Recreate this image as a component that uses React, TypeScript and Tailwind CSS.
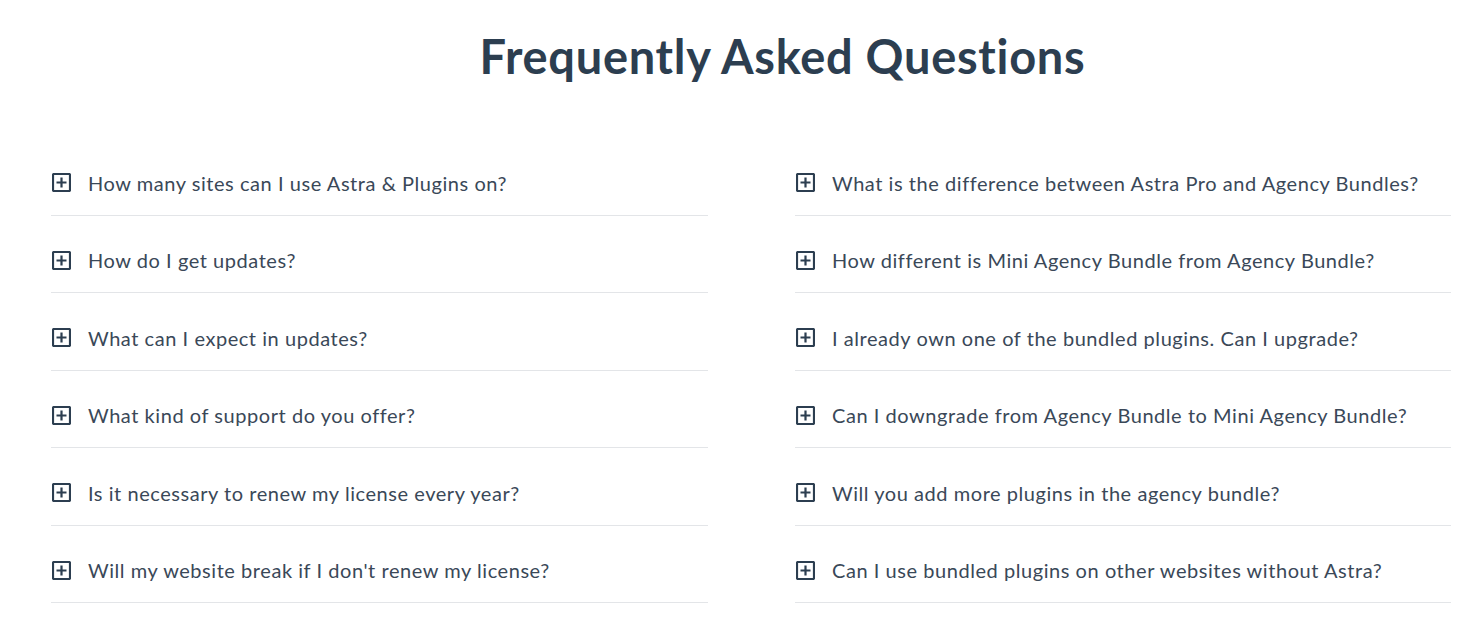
import React from 'react';

const left = [
  'How many sites can I use Astra & Plugins on?',
  'How do I get updates?',
  'What can I expect in updates?',
  'What kind of support do you offer?',
  'Is it necessary to renew my license every year?',
  "Will my website break if I don't renew my license?",
];

const right = [
  'What is the difference between Astra Pro and Agency Bundles?',
  'How different is Mini Agency Bundle from Agency Bundle?',
  'I already own one of the bundled plugins. Can I upgrade?',
  'Can I downgrade from Agency Bundle to Mini Agency Bundle?',
  'Will you add more plugins in the agency bundle?',
  'Can I use bundled plugins on other websites without Astra?',
];

const PlusBox = () => (
  <svg width="19" height="19" viewBox="0 0 19 19" className="shrink-0">
    <rect x="1" y="1" width="17" height="17" fill="none" stroke="#2c3e50" strokeWidth="2.2" rx="1" />
    <path d="M9.5 4.5v10M4.5 9.5h10" stroke="#2c3e50" strokeWidth="2.2" />
  </svg>
);

const Column = ({ items }: { items: string[] }) => (
  <div className="flex flex-col">
    {items.map((q) => (
      <div key={q} className="h-[77.5px] flex items-end pb-[17px] border-b border-[#e3e5e8]">
        <div className="flex items-center gap-[17px] pl-[1px]">
          <PlusBox />
          <span className="text-[20px] leading-[30px] tracking-[0.55px] text-[#3a4858]">{q}</span>
        </div>
      </div>
    ))}
  </div>
);

export default function App() {
  return (
    <div className="w-[1478px] h-[625px] bg-white overflow-hidden" style={{ fontFamily: 'Lato, "Open Sans", sans-serif' }}>
      <h1 className="pt-[26px] pl-[87px] text-center text-[47px] leading-[60px] font-bold text-[#2c3e50] tracking-[0.7px]">
        Frequently Asked Questions
      </h1>
      <div className="grid grid-cols-[657px_656px] gap-x-[87px] pl-[51px] pt-[52px]">
        <Column items={left} />
        <Column items={right} />
      </div>
    </div>
  );
}
